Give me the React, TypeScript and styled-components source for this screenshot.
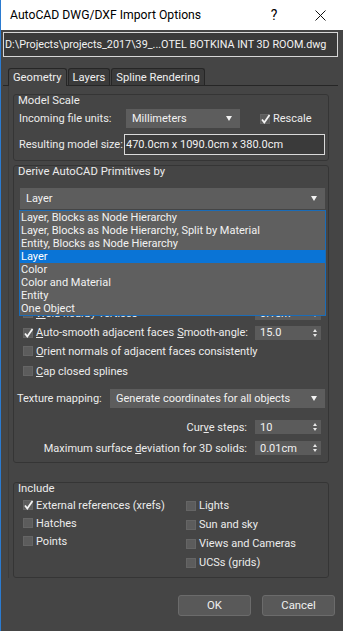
import styled, { createGlobalStyle } from 'styled-components'

const GlobalStyle = createGlobalStyle`
  html, body { margin: 0; padding: 0; background: #454545; }
  body {
    font-family: Roboto, "Noto Sans", "DejaVu Sans", sans-serif;
    font-size: 11px;
    color: #ececec;
  }
  * { box-sizing: border-box; }
`

const Window = styled.div`
  width: 343px;
  height: 631px;
  display: flex;
  flex-direction: column;
  border-left: 1px solid #2b7bd0;
  background: #454545;
  overflow: hidden;
`

const TitleBar = styled.div`
  height: 30px;
  flex: none;
  display: flex;
  align-items: center;
  background: #ffffff;
  color: #000;
  font-size: 12.2px;
  padding-left: 9px;
`

const TitleText = styled.div`
  flex: 1;
`

const TitleButton = styled.div`
  width: 46px;
  height: 30px;
  display: flex;
  align-items: center;
  justify-content: center;
  font-size: 14px;
`

const Body = styled.div`
  flex: 1;
  display: flex;
  flex-direction: column;
  padding: 2px 5px 0 2px;
`

const PathField = styled.div`
  height: 25px;
  display: flex;
  align-items: center;
  padding-left: 1px;
  border: 1px solid #d6d6d6;
  background: #393939;
  color: #f2f2f2;
  font-size: 10.8px;
  white-space: nowrap;
  overflow: hidden;
`

const TabStrip = styled.div`
  margin-top: 11px;
  height: 18px;
  display: flex;
  align-items: flex-end;
  padding-left: 5px;
  border-bottom: 1px solid #262626;
`

const Tab = styled.div<{ $active?: boolean }>`
  height: ${(p) => (p.$active ? 18 : 17)}px;
  margin-bottom: ${(p) => (p.$active ? -1 : 0)}px;
  margin-right: 1px;
  padding: 0 4px;
  display: flex;
  align-items: center;
  border: 1px solid #262626;
  border-bottom: none;
  border-radius: 3px 3px 0 0;
  background: ${(p) => (p.$active ? '#454545' : '#3b3b3b')};
  color: #f0f0f0;
  font-size: 11.2px;
`

const Panel = styled.div`
  margin-left: 5px;
  border-left: 1px solid #3c3c3c;
  display: flex;
  flex-direction: column;
  padding: 0 9px 0 4px;
`

const Group = styled.div<{ $mt: number; $pb: number }>`
  margin-top: ${(p) => p.$mt}px;
  border: 1px solid #353535;
  border-radius: 3px;
  padding: 0 3px ${(p) => p.$pb}px 3px;
  display: flex;
  flex-direction: column;
`

const GroupTitle = styled.div`
  height: 13px;
  line-height: 13px;
  margin: -1px 0 0 1px;
  font-size: 11.3px;
`

const Row = styled.div<{ $h: number; $mt?: number; $ml?: number }>`
  height: ${(p) => p.$h}px;
  margin-top: ${(p) => p.$mt ?? 0}px;
  margin-left: ${(p) => p.$ml ?? 0}px;
  display: flex;
  align-items: center;
  white-space: nowrap;
`

const RightRow = styled(Row)`
  justify-content: flex-end;
  gap: 8px;
  margin-right: 4px;
`

const Label = styled.div<{ $w?: number }>`
  width: ${(p) => (p.$w ? `${p.$w}px` : 'auto')};
  flex: none;
`

const PushRight = styled.div`
  margin-left: auto;
  display: flex;
  align-items: center;
  gap: 7px;
  margin-right: 4px;
`

const Combo = styled.div<{ $w?: number; $h: number }>`
  position: relative;
  width: ${(p) => (p.$w ? `${p.$w}px` : 'auto')};
  flex: ${(p) => (p.$w ? 'none' : '1')};
  height: ${(p) => p.$h}px;
  display: flex;
  align-items: center;
  padding: 0 8px 0 6px;
  background: #5d5d5d;
  color: #f2f2f2;
`

const ComboText = styled.span`
  flex: 1;
`

const Arrow = styled.span`
  width: 0;
  height: 0;
  border-left: 3.5px solid transparent;
  border-right: 3.5px solid transparent;
  border-top: 5px solid #f2f2f2;
`

const DropList = styled.div`
  position: absolute;
  top: calc(100% + 1px);
  left: -1px;
  right: -1px;
  z-index: 5;
  background: #5f5f5f;
  border: 1px solid #1b6cb7;
`

const DropItem = styled.div<{ $sel?: boolean }>`
  height: 13px;
  line-height: 13px;
  padding-left: 1px;
  white-space: nowrap;
  background: ${(p) => (p.$sel ? '#0a74d6' : 'transparent')};
  color: ${(p) => (p.$sel ? '#ffffff' : '#f2f2f2')};
`

const Field = styled.div`
  flex: 1;
  height: 21px;
  display: flex;
  align-items: center;
  padding-left: 1px;
  border: 1px solid #d9d9d9;
  background: #3a3a3a;
  color: #f2f2f2;
`

const Spinner = styled.div<{ $h?: number }>`
  width: 66px;
  height: ${(p) => p.$h ?? 14}px;
  flex: none;
  display: flex;
  align-items: center;
  padding: 0 4px 0 5px;
  background: #5b5b5b;
  color: #f2f2f2;
`

const SpinArrows = styled.span`
  margin-left: auto;
  display: flex;
  flex-direction: column;
  gap: 2px;
`

const SpinUp = styled.span`
  width: 0;
  height: 0;
  border-left: 2.5px solid transparent;
  border-right: 2.5px solid transparent;
  border-bottom: 3px solid #e8e8e8;
`

const SpinDown = styled(SpinUp)`
  border-bottom: none;
  border-top: 3px solid #e8e8e8;
`

const CheckRow = styled.label<{ $h: number; $mt?: number }>`
  height: ${(p) => p.$h}px;
  margin-top: ${(p) => p.$mt ?? 0}px;
  display: flex;
  align-items: center;
  gap: 3px;
  white-space: nowrap;
`

const Box = styled.span`
  width: 10px;
  height: 10px;
  flex: none;
  position: relative;
  background: #5c5c5c;
  border: 1px solid #656565;
`

const CheckMark = styled.svg`
  position: absolute;
  left: -1px;
  top: -2px;
`

const Columns = styled.div`
  margin-top: 1px;
  margin-left: 6px;
  display: grid;
  grid-template-columns: 163px 1fr;
`

const Column = styled.div`
  display: flex;
  flex-direction: column;
`

const ButtonRow = styled.div`
  margin-top: 17px;
  display: flex;
  justify-content: flex-end;
  gap: 11px;
  padding-right: 3px;
`

const Button = styled.button`
  width: 73px;
  height: 21px;
  background: #595959;
  border: 1px solid #6b6b6b;
  border-radius: 3px;
  color: #f0f0f0;
  font-family: inherit;
  font-size: 11.3px;
  padding: 0;
`

function Check({ label, checked, h, mt }: { label: React.ReactNode; checked?: boolean; h: number; mt?: number }) {
  return (
    <CheckRow $h={h} $mt={mt}>
      <Box>
        {checked && (
          <CheckMark width="11" height="12" viewBox="0 0 11 12">
            <path d="M2 6.5 L4.3 9.5 L9.5 2" stroke="#f4f4f4" strokeWidth="1.8" fill="none" />
          </CheckMark>
        )}
      </Box>
      <span>{label}</span>
    </CheckRow>
  )
}

function Spin({ value, h }: { value: string; h?: number }) {
  return (
    <Spinner $h={h}>
      {value}
      <SpinArrows>
        <SpinUp />
        <SpinDown />
      </SpinArrows>
    </Spinner>
  )
}

const primitives = [
  'Layer, Blocks as Node Hierarchy',
  'Layer, Blocks as Node Hierarchy, Split by Material',
  'Entity, Blocks as Node Hierarchy',
  'Layer',
  'Color',
  'Color and Material',
  'Entity',
  'One Object',
]

export default function App() {
  return (
    <Window>
      <GlobalStyle />
      <TitleBar>
        <TitleText>AutoCAD DWG/DXF Import Options</TitleText>
        <TitleButton>?</TitleButton>
        <TitleButton>
          <svg width="11" height="11" viewBox="0 0 11 11">
            <path d="M0.5 0.5 L10.5 10.5 M10.5 0.5 L0.5 10.5" stroke="#111" strokeWidth="1" />
          </svg>
        </TitleButton>
      </TitleBar>

      <Body>
        <PathField>D:\Projects\projects_2017\39_...OTEL BOTKINA INT 3D ROOM.dwg</PathField>

        <TabStrip>
          <Tab $active>Geometry</Tab>
          <Tab>Layers</Tab>
          <Tab>Spline Rendering</Tab>
        </TabStrip>

        <Panel>
          <Group $mt={8} $pb={5}>
            <GroupTitle>Model Scale</GroupTitle>
            <Row $h={19} $mt={2} $ml={2}>
              <Label $w={107}>Incoming file units:</Label>
              <Combo $w={114} $h={19}>
                <ComboText>Millimeters</ComboText>
                <Arrow />
              </Combo>
              <Row $h={19} $ml={20}>
                <Check label="Rescale" checked h={19} />
              </Row>
            </Row>
            <Row $h={21} $mt={6} $ml={2}>
              <Label $w={105}>Resulting model size:</Label>
              <Field>470.0cm x 1090.0cm x 380.0cm</Field>
            </Row>
          </Group>

          <Group $mt={4} $pb={7}>
            <GroupTitle>Derive AutoCAD Primitives by</GroupTitle>
            <Row $h={21} $mt={10} $ml={3}>
              <Combo $h={21}>
                <ComboText>Layer</ComboText>
                <Arrow />
                <DropList>
                  {primitives.map((p, i) => (
                    <DropItem key={p} $sel={i === 3}>
                      {p}
                    </DropItem>
                  ))}
                </DropList>
              </Combo>
            </Row>

            <Row $h={16} $mt={96} $ml={6}>
              <Check h={16} label={<><u>W</u>eld nearby vertices</>} />
              <PushRight>
                <Spin value="0.1cm" />
              </PushRight>
            </Row>
            <Row $h={15} $mt={4} $ml={6}>
              <Check h={15} checked label={<><u>A</u>uto-smooth adjacent faces</>} />
              <PushRight>
                <Label><u>S</u>mooth-angle:</Label>
                <Spin value="15.0" />
              </PushRight>
            </Row>
            <Row $h={16} $mt={3} $ml={6}>
              <Check h={16} label={<><u>O</u>rient normals of adjacent faces consistently</>} />
            </Row>
            <Row $h={16} $mt={4} $ml={6}>
              <Check h={16} label={<><u>C</u>ap closed splines</>} />
            </Row>
            <Row $h={19} $mt={10}>
              <Label $w={93}>Texture mapping:</Label>
              <Combo $h={19}>
                <ComboText>Generate coordinates for all objects</ComboText>
                <Arrow />
              </Combo>
            </Row>
            <RightRow $h={14} $mt={12}>
              <Label>Cur<u>v</u>e steps:</Label>
              <Spin value="10" />
            </RightRow>
            <RightRow $h={14} $mt={7}>
              <Label>Maximum surface <u>d</u>eviation for 3D solids:</Label>
              <Spin value="0.01cm" />
            </RightRow>
          </Group>

          <Group $mt={19} $pb={5}>
            <GroupTitle>Include</GroupTitle>
            <Columns>
              <Column>
                <Check h={18} checked label="External references (xrefs)" />
                <Check h={18} label="Hatches" />
                <Check h={18} label="Points" />
              </Column>
              <Column>
                <Check h={19} label="Lights" />
                <Check h={19} label="Sun and sky" />
                <Check h={19} label="Views and Cameras" />
                <Check h={19} label="UCSs (grids)" />
              </Column>
            </Columns>
          </Group>
        </Panel>

        <ButtonRow>
          <Button>OK</Button>
          <Button>Cancel</Button>
        </ButtonRow>
      </Body>
    </Window>
  )
}
